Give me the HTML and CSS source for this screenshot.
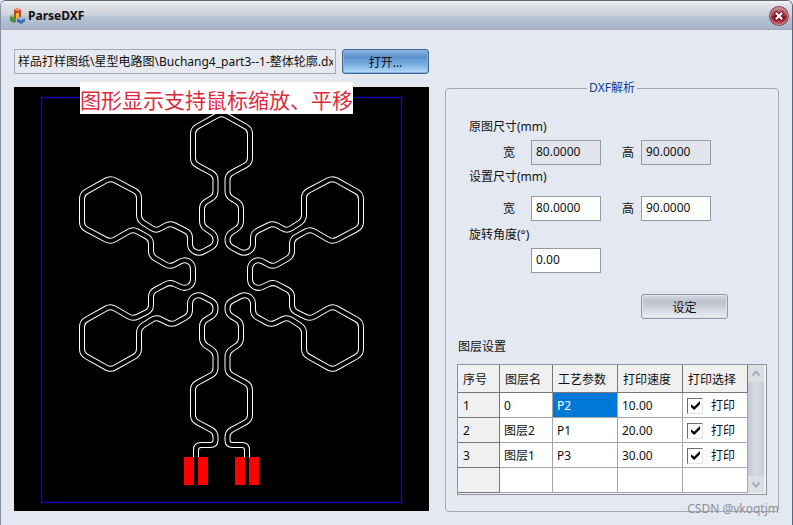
FILE: index.html
```html
<!DOCTYPE html>
<html lang="zh-CN">
<head>
<meta charset="utf-8">
<title>ParseDXF</title>
<link rel="stylesheet" href="styles.css">
</head>
<body>
<div class="window">
  <header class="titlebar">
    <svg class="app-icon" viewBox="0 0 16 16" aria-hidden="true">
      <path d="M1 8 4 6.500 7 8v6l-2 1-4-2z" fill="#4f8f3c"/>
      <path d="M1 8 4 6.500 7 8 4.500 9z" fill="#a9cf7c"/>
      <path d="M5 1.500 8.500 0 12 1.500V9l-3 1.500L5 9z" fill="#c4432c"/>
      <path d="M5 1.500 8.500 0 12 1.500 9 3z" fill="#f0a080"/>
      <path d="M7 5h3v6H7z" fill="#e8b83a"/>
      <path d="M8 10.500 12 9l4 1.500v3L12.500 16 8 14z" fill="#3f6fb5"/>
      <path d="M8 10.500 12 9l4 1.500-3.500 1.500z" fill="#9fc3ee"/>
    </svg>
    <h1 class="title">ParseDXF</h1>
    <button class="close" type="button" aria-label="关闭">
      <svg viewBox="0 0 22 22" aria-hidden="true">
        <defs>
          <linearGradient id="closeFill" x1="0" y1="0" x2="0" y2="1">
            <stop offset="0" stop-color="#c98a92"/>
            <stop offset=".45" stop-color="#a83b48"/>
            <stop offset=".55" stop-color="#8f1526"/>
            <stop offset="1" stop-color="#d0505c"/>
          </linearGradient>
        </defs>
        <circle cx="11" cy="11" r="10" fill="#7d4650"/>
        <circle cx="11" cy="11" r="8.500" fill="url(#closeFill)" stroke="#d8a3a8" stroke-width=".8"/>
        <path d="m8.500 8.500 5 5m0-5-5 5" stroke="#5c1420" stroke-width="4" stroke-linecap="square"/>
        <path d="m8.500 8.500 5 5m0-5-5 5" stroke="#fff" stroke-width="2" stroke-linecap="square"/>
      </svg>
    </button>
  </header>

  <main class="content">
    <section class="viewer">
      <div class="file-row">
        <input class="path" type="text" readonly aria-label="文件路径" value="样品打样图纸\星型电路图\Buchang4_part3--1-整体轮廓.dx">
        <button class="btn btn-primary" type="button">打开...</button>
      </div>
      <div class="canvas">
        <svg class="drawing" viewBox="14 87 415 424" role="img" aria-label="DXF 图形">
          <rect class="bounds" x="41.500" y="97.500" width="360" height="405"/>
          <g class="tracks"></g>
          <g class="pads">
            <rect x="184" y="457" width="10" height="28"/>
            <rect x="198" y="457" width="10" height="28"/>
            <rect x="235" y="457" width="10" height="28"/>
            <rect x="249" y="457" width="10" height="28"/>
          </g>
        </svg>
        <p class="hint">图形显示支持鼠标缩放、平移</p>
      </div>
    </section>

    <section class="side">
      <fieldset class="panel">
        <legend>DXF解析</legend>
        <form class="params">
          <div class="group">
            <p class="heading">原图尺寸(mm)</p>
            <div class="fields">
              <label for="ow">宽</label><input id="ow" class="num" type="text" readonly value="80.0000">
              <label for="oh">高</label><input id="oh" class="num" type="text" readonly value="90.0000">
            </div>
          </div>
          <div class="group group-loose">
            <p class="heading">设置尺寸(mm)</p>
            <div class="fields">
              <label for="sw">宽</label><input id="sw" class="num" type="text" value="80.0000">
              <label for="sh">高</label><input id="sh" class="num" type="text" value="90.0000">
            </div>
          </div>
          <div class="group">
            <label class="heading" for="angle">旋转角度(°)</label>
            <div class="fields">
              <input id="angle" class="num num-angle" type="text" value="0.00">
            </div>
          </div>
          <button class="btn apply" type="button">设定</button>
        </form>

        <h2 class="subhead">图层设置</h2>
        <div class="grid-box">
          <table class="layers">
            <colgroup><col class="c1"><col class="c2"><col class="c3"><col class="c4"><col class="c5"></colgroup>
            <thead>
              <tr><th>序号</th><th>图层名</th><th>工艺参数</th><th>打印速度</th><th>打印选择</th></tr>
            </thead>
            <tbody>
              <tr><th>1</th><td>0</td><td class="selected">P2</td><td>10.00</td><td><label class="check"><input type="checkbox" checked>打印</label></td></tr>
              <tr><th>2</th><td>图层2</td><td>P1</td><td>20.00</td><td><label class="check"><input type="checkbox" checked>打印</label></td></tr>
              <tr><th>3</th><td>图层1</td><td>P3</td><td>30.00</td><td><label class="check"><input type="checkbox" checked>打印</label></td></tr>
              <tr><th></th><td></td><td></td><td></td><td></td></tr>
            </tbody>
          </table>
          <div class="scrollbar">
            <button type="button" aria-label="向上滚动"><svg viewBox="0 0 16 17" aria-hidden="true"><path d="m4.500 10.500 3.500-4 3.500 4"/></svg></button>
            <button type="button" aria-label="向下滚动"><svg viewBox="0 0 16 17" aria-hidden="true"><path d="m4.500 6.500 3.500 4 3.500-4"/></svg></button>
          </div>
        </div>
      </fieldset>
    </section>
  </main>
  <p class="watermark">CSDN @vkoqtjm</p>
</div>
<script src="drawing.js"></script>
</body>
</html>
```

FILE: styles.css
```css
* { box-sizing: border-box; }

body {
  margin: 0;
  background: #e4e8f0;
  color: #111;
  font: 12px/16px "Noto Sans", "Noto Sans CJK SC", sans-serif;
}

h1, h2, p { margin: 0; font-size: inherit; font-weight: inherit; }
button, input { font: inherit; color: inherit; }

.window {
  position: relative;
  min-height: 100vh;
  border: 1px solid #5d6478;
  border-left-color: #8690a4;
  border-radius: 6px 6px 0 0;
  background: #e4e8f0;
}

.titlebar {
  display: flex;
  align-items: center;
  gap: 3px;
  height: 29px;
  padding: 0 2px 0 8px;
  border-radius: 5px 5px 0 0;
  background: linear-gradient(#f2f4f6 0, #dfe1e6 15%, #cdd1d8 48%, #b9c4d5 54%, #a9b4c8 95%, #98a3b5);
}
.app-icon { width: 16px; height: 16px; }
.title { flex: 1; font-weight: 700; }
.close { width: 22px; height: 22px; padding: 0; border: 0; background: none; }
.close svg { display: block; }

.content {
  display: grid;
  grid-template-columns: 415fr 334fr;
  gap: 16px;
  padding: 19px 13px 13px;
}

.file-row { display: flex; gap: 6px; margin-bottom: 13px; }
.path {
  flex: 1;
  min-width: 0;
  height: 25px;
  padding: 0 2px 2px 3px;
  border: 1px solid #a3a9b3;
  background: #e6e9ef;
}

.btn {
  width: 87px;
  height: 25px;
  padding: 2px 0 0;
  border: 1px solid #8e97a8;
  border-radius: 3px;
  background: linear-gradient(#d5d9e0, #b9c0cd 30%, #d3d8e0 65%, #eceff3);
  box-shadow: inset 0 0 0 1px #dfe3ea;
}
.btn-primary {
  border-color: #3d6595;
  background: linear-gradient(#8fb8e4, #5990cd 30%, #7db0e2 65%, #b5dcfa);
  box-shadow: inset 0 0 0 1px #86b2e0;
}

.canvas { position: relative; background: #000; }
.drawing { display: block; width: 100%; }
.bounds { fill: none; stroke: #1606b4; stroke-width: 1.4; }
.outline, .core { fill: none; stroke-linejoin: round; }
.outline { stroke: #fff; stroke-width: 6; }
.core { stroke: #000; stroke-width: 4; }
.pads { fill: #f00; }
.hint {
  position: absolute;
  top: -5px;
  left: 66px;
  padding-top: 2px;
  background: #fff;
  color: #dc2a40;
  font-family: "Noto Sans CJK SC", sans-serif;
  font-size: 21px;
  font-weight: 400;
  line-height: 30px;
  white-space: nowrap;
}

.side { display: flex; padding-top: 31px; }
.panel {
  flex: 1;
  min-width: 0;
  margin: 0;
  padding: 23px 11px 16px;
  border: 1px solid #a3a8b5;
  border-radius: 4px;
}
legend { margin: 0 auto; padding: 0 2px; color: #12409a; }

.params { display: flex; flex-direction: column; gap: 4px; padding-left: 12px; }
.group { display: flex; flex-direction: column; gap: 5px; }
.group-loose { gap: 11px; margin-bottom: 2px; }
.fields { display: flex; align-items: center; padding-left: 34px; }
.fields label { width: 28px; }
.fields label + .num + label { width: 19px; margin-left: 21px; }
.num {
  width: 70px;
  height: 25px;
  padding: 0 4px 2px;
  border: 1px solid #959ba6;
  background: #fff;
}
.num[readonly] { background: #e2e6ec; }
.num-angle { margin-left: 28px; }
.apply { margin: 17px 0 0 172px; }

.subhead { margin: 20px 0 9px 1px; }

.grid-box { display: flex; border: 1px solid #8f939b; padding-right: 2px; padding-bottom: 1px; background: #eef0f4; }
.layers { flex: 1; border-collapse: separate; border-spacing: 0; table-layout: fixed; }
.c1 { width: 42px; }
.c2 { width: 53px; }
.c3 { width: 65px; }
.c4 { width: 65px; }
.c5 { width: 65px; }
.layers th, .layers td {
  height: 25px;
  padding: 2px 0 0 4px;
  border-right: 1px solid #a6a6a6;
  border-bottom: 1px solid #a6a6a6;
  background: #fff;
  font-weight: 400;
  text-align: left;
  white-space: nowrap;
}
.layers th { padding-left: 5px; border-color: #777; background: #f0f0f0; }
.layers thead th { height: 28px; }
.layers td.selected { background: #0078d7; color: #fff; }

.check { display: flex; align-items: center; gap: 8px; }
.check input {
  appearance: none;
  width: 16px;
  height: 16px;
  margin: 0;
  border: 1px solid;
  border-color: #6d6d6d #e3e3e3 #e3e3e3 #6d6d6d;
  background: #fff;
}
.check input:checked::before {
  content: "";
  display: block;
  width: 9px;
  height: 9px;
  margin: 2px 3px;
  background: #000;
  clip-path: polygon(0 35%, 35% 65%, 100% 0, 100% 35%, 35% 100%, 0 68%);
}

.scrollbar {
  display: flex;
  flex-direction: column;
  justify-content: space-between;
  width: 16px;
  background: linear-gradient(90deg, #c4c9d5, #d6dae4 50%, #c9cdd8);
}
.scrollbar button { width: 16px; height: 17px; padding: 0; border: 0; background: #dcdee3; }
.scrollbar svg { display: block; fill: none; stroke: #aaadb3; stroke-width: 2; }

.watermark {
  position: absolute;
  right: 13px;
  bottom: 8px;
  color: #8d9097;
}
```

FILE: drawing.js
```js
// Centre line of the left half of the antenna; the right half mirrors it.
const AXIS = 221.5;
const points = [
  [196, 458], [196, 445], [215.5, 445], [215.5, 432], [193, 420], [193, 385],
  [215.5, 373], [215.5, 352], [202, 343], [202, 322], [215.5, 314], [215.5, 303],
  [198, 294], [190, 299], [190, 315], [172, 325], [156, 317], [139, 328],
  [139, 354], [110.500, 370], [82, 354], [82, 322], [110.500, 306], [133, 319],
  [151, 310], [151, 292], [170, 282], [185, 289], [193, 284], [193, 264],
  [185, 259], [170, 267], [151, 256], [151, 239], [133, 229], [110.500, 242],
  [82, 227], [82, 194], [110.500, 178], [139, 193], [139, 220], [156, 231],
  [170, 223], [190, 233], [190, 249], [199, 254], [215.5, 245], [215.5, 235],
  [202, 226], [202, 204], [215.5, 196], [215.5, 175], [193, 163], [193, 129],
  [221.5, 113]
];

function roundedPath(pts, radius) {
  const toward = (a, b) => {
    const len = Math.hypot(b[0] - a[0], b[1] - a[1]);
    const t = Math.min(radius, len / 2) / len;
    return [a[0] + (b[0] - a[0]) * t, a[1] + (b[1] - a[1]) * t];
  };
  let d = `M${pts[0]}`;
  for (let i = 1; i < pts.length - 1; i++) {
    d += `L${toward(pts[i], pts[i - 1])}Q${pts[i]} ${toward(pts[i], pts[i + 1])}`;
  }
  return d + `L${pts[pts.length - 1]}`;
}

const mirrored = points.map(([x, y]) => [2 * AXIS - x, y]);
const d = roundedPath(points.concat(mirrored.reverse().slice(1)), 5);
const group = document.querySelector(".tracks");
for (const name of ["outline", "core"]) {
  const path = document.createElementNS("http://www.w3.org/2000/svg", "path");
  path.setAttribute("class", name);
  path.setAttribute("d", d);
  group.append(path);
}
```
